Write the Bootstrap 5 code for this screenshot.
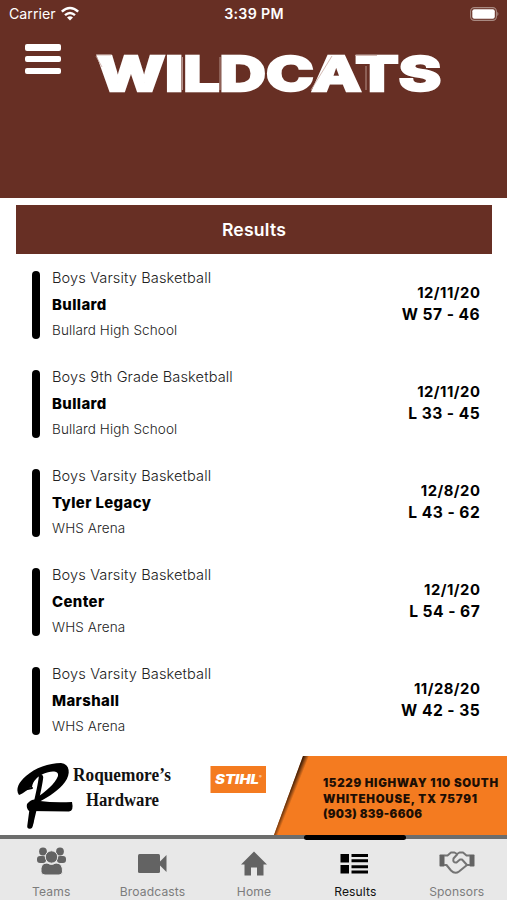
<!DOCTYPE html>
<html lang="en">
<head>
<meta charset="utf-8">
<meta name="viewport" content="width=device-width, initial-scale=1">
<title>Wildcats Results</title>
<link href="https://cdn.jsdelivr.net/npm/bootstrap@5.3.0/dist/css/bootstrap.min.css" rel="stylesheet">
<style>
body{font-family:Inter,"Liberation Sans",sans-serif;background:#fff;color:#000}
.screen{width:507px;height:900px}
.maroon{background:#672f24;color:#fff}
.app-head{height:198px}
.status{height:28px;font-size:14.2px;line-height:28px;padding:0 8px 0 9px;grid-template-columns:1fr auto 1fr}
.status .clock{font-weight:600;letter-spacing:.3px}
.brand-row{padding:16px 0 0 25px}
.menu-btn{width:36px;height:30px}
.menu-btn span{height:6.5px;border-radius:2px;background:#fff}
.wordmark{margin:-5px 0 0 30px}
.title-bar{height:49px;margin:7px 15px 0 16px;font-size:17.6px;font-weight:600;letter-spacing:.22px}
.results{padding:11px 27px 0 32px}
.game{height:78px;margin-bottom:21px}
.stripe{width:8px;height:68px;border-radius:4px;background:#000;margin:1px 12px 0 0}
.game-text>div{line-height:26px;white-space:nowrap}
.team{font-size:14.6px;font-weight:300;color:#222;letter-spacing:.11px}
.game-text .rival{font-size:14.9px;font-weight:800;letter-spacing:.4px;line-height:28px;margin-bottom:-2px}
.venue{font-size:13.5px;font-weight:300;color:#222;letter-spacing:.11px}
.score{line-height:22px;font-weight:650;margin-top:-1px}
.date{font-size:14.8px;letter-spacing:.5px;margin-right:-.4px}
.points{font-size:15.6px;letter-spacing:.46px;margin-right:-.2px}
.ad{height:79px}
.tabs{height:65px;background:#e8e8e8;border-top:4px solid #6c6d6c}
.tab{width:101.4px;color:#7c7c7c;font-size:12.1px;padding:7px 0 0 1px;text-decoration:none}
.tab svg{display:block;fill:#636363;flex-shrink:0}
.tab .cap{line-height:16px;margin-top:7px;letter-spacing:.13px}
.tab.on{color:#111}
.tab.on svg{fill:#000}
.tab.on::before{content:"";position:absolute;top:-4px;left:0;width:102px;height:5px;border-radius:3px;background:#000}
</style>
<script src="https://cdn.jsdelivr.net/npm/bootstrap@5.3.0/dist/js/bootstrap.bundle.min.js"></script>
</head>
<body>
<div class="screen d-flex flex-column overflow-hidden">
  <header class="app-head maroon flex-shrink-0">
    <div class="status d-grid">
      <div class="d-flex align-items-center">Carrier
        <svg class="ms-1" width="20" height="16" viewBox="0 0 20 16"><g fill="none" stroke="#fff" stroke-width="2.4"><path d="M1.8 5.7Q10-1.8 18.2 5.7"/><path d="M5 9.2Q10 4.6 15 9.2"/></g><path fill="#fff" d="M10 14.500L7 11.400Q10 8.900 13 11.400Z"/></svg>
      </div>
      <div class="clock">3:39 PM</div>
      <div class="d-flex align-items-center justify-content-end">
        <svg width="30" height="14" viewBox="0 0 30 14"><rect x="1.600" y=".6" width="25.800" height="12.800" rx="3.800" fill="none" stroke="#a98a82" stroke-width="1.100"/><rect x="3.300" y="2.300" width="22.500" height="9.400" rx="2" fill="#fff"/><path d="M28.300 4.800Q30.600 7 28.300 9.200Z" fill="#a98a82"/></svg>
      </div>
    </div>
    <div class="brand-row d-flex align-items-start">
      <div class="menu-btn d-flex flex-column justify-content-between"><span></span><span></span><span></span></div>
      <svg class="wordmark" width="360" height="70" viewBox="-3 -10 360 70">
        <text y="42" font-family="Inter" font-weight="800" font-size="48" fill="#fff" stroke="#fff" stroke-width="2.500" textLength="344" x="3" lengthAdjust="spacingAndGlyphs">WILDCATS</text>
        <g stroke="#c9aaa3" stroke-width="1" fill="none" opacity=".8"><path d="M2 7L8 18M2 6h15M88.500 8v33M126 8v33M238 7L217 41M261 6.500h22M272 17v24"/></g>
      </svg>
    </div>
  </header>
  <h1 class="title-bar maroon d-flex align-items-center justify-content-center flex-shrink-0 mb-0">Results</h1>
  <main class="results flex-grow-1">
    <div class="game d-flex align-items-center"><div class="stripe"></div><div class="game-text flex-grow-1"><div class="team">Boys Varsity Basketball</div><div class="rival">Bullard</div><div class="venue">Bullard High School</div></div><div class="score text-end"><div class="date">12/11/20</div><div class="points">W 57 - 46</div></div></div>
    <div class="game d-flex align-items-center"><div class="stripe"></div><div class="game-text flex-grow-1"><div class="team">Boys 9th Grade Basketball</div><div class="rival">Bullard</div><div class="venue">Bullard High School</div></div><div class="score text-end"><div class="date">12/11/20</div><div class="points">L 33 - 45</div></div></div>
    <div class="game d-flex align-items-center"><div class="stripe"></div><div class="game-text flex-grow-1"><div class="team">Boys Varsity Basketball</div><div class="rival">Tyler Legacy</div><div class="venue">WHS Arena</div></div><div class="score text-end"><div class="date">12/8/20</div><div class="points">L 43 - 62</div></div></div>
    <div class="game d-flex align-items-center"><div class="stripe"></div><div class="game-text flex-grow-1"><div class="team">Boys Varsity Basketball</div><div class="rival">Center</div><div class="venue">WHS Arena</div></div><div class="score text-end"><div class="date">12/1/20</div><div class="points">L 54 - 67</div></div></div>
    <div class="game d-flex align-items-center mb-0"><div class="stripe"></div><div class="game-text flex-grow-1"><div class="team">Boys Varsity Basketball</div><div class="rival">Marshall</div><div class="venue">WHS Arena</div></div><div class="score text-end"><div class="date">11/28/20</div><div class="points">W 42 - 35</div></div></div>
  </main>
  <aside class="ad flex-shrink-0">
    <svg class="d-block" width="507" height="79" viewBox="0 756 507 79">
      <defs><linearGradient id="edge" gradientUnits="userSpaceOnUse" x1="288" y1="795" x2="293" y2="797"><stop offset="0" stop-color="#3a1c08"/><stop offset="1" stop-color="#f47b20"/></linearGradient></defs>
      <path d="M303 756H507V835H274Z" fill="#f47b20"/>
      <path d="M303 756h6L280 835h-6Z" fill="url(#edge)"/>
      <path d="M19 795C15 789 19 782 26 776C35 768 49 763 61 763C70 764 71 774 65 782C59 790 50 796 39 802L36 798C45 792 55 784 58 776C59 770 50 771 43 774C37 777 33 781 32 787C29 787 24 794 19 795Z"/>
      <g fill="none" stroke="#000" stroke-linecap="round" stroke-linejoin="round">
        <path d="M41 777C40 788 35 806 31 824" stroke-width="4.500"/>
        <path d="M32 811L30 826" stroke-width="5.500"/>
        <path d="M23 790L32 788" stroke-width="2"/>
      </g>
      <path d="M27 804Q33 797 40 801Q54 803 72 802Q74 811 69 811.500Q48 811 29 811Q26 808 27 804Z"/>
      <g font-family="Liberation Serif" font-weight="700" font-size="18.500" fill="#111">
        <text x="73" y="781" textLength="98" lengthAdjust="spacingAndGlyphs">Roquemore’s</text>
        <text x="86" y="806" textLength="73" lengthAdjust="spacingAndGlyphs">Hardware</text>
      </g>
      <rect x="210.500" y="766" width="55.500" height="27" fill="#f47b20"/>
      <text x="215" y="784" textLength="44" lengthAdjust="spacingAndGlyphs" font-family="Inter" font-style="italic" font-weight="900" font-size="13" fill="#fff">STIHL</text>
      <text x="259" y="778" font-family="Inter" font-size="4" fill="#fff">®</text>
      <g font-family="Inter" font-weight="900" font-size="11.500" fill="#1d0f05">
        <text x="323" y="787" textLength="175">15229 HIGHWAY 110 SOUTH</text>
        <text x="323" y="802.500" textLength="154">WHITEHOUSE, TX 75791</text>
        <text x="323" y="817.700" textLength="99">(903) 839-6606</text>
      </g>
    </svg>
  </aside>
  <nav class="tabs d-flex flex-shrink-0">
    <a class="tab d-flex flex-column align-items-center position-relative">
      <svg width="32" height="31" viewBox="0 0 32 31"><circle cx="8" cy="5.500" r="3.900"/><circle cx="25" cy="5.500" r="3.900"/><rect x="2" y="10" width="9" height="7" rx="3"/><rect x="22" y="10" width="9" height="7" rx="3"/><g stroke="#e8e8e8" stroke-width="1"><circle cx="16.500" cy="11" r="6.200"/><path d="M6 26Q5 17 12 17Q16.500 20 21 17Q28 17 27.500 26Q27 29 24 29H10Q6.500 29 6 26Z"/></g></svg>
      <span class="cap">Teams</span>
    </a>
    <a class="tab d-flex flex-column align-items-center position-relative">
      <svg width="32" height="31" viewBox="1 0 32 31"><rect x="2" y="8" width="22" height="19" rx="1.500"/><path d="M22 17.500L30.500 9V26Z"/></svg>
      <span class="cap">Broadcasts</span>
    </a>
    <a class="tab d-flex flex-column align-items-center position-relative">
      <svg width="32" height="31" viewBox="0 0 32 31"><path d="M16 5.500L29 18.500H25.500V29.500H19V21.500H13V29.500H6.500V18.500H3Z"/></svg>
      <span class="cap">Home</span>
    </a>
    <a class="tab on d-flex flex-column align-items-center position-relative">
      <svg width="32" height="31" viewBox="1 0 32 31"><path d="M2.500 8h8.500v8.500H2.500zM2.500 19h8.500v8.500H2.500zM13.500 8H30v3H13.500zM13.500 13.300H30v3H13.500zM13.500 19.200H30v3H13.500zM13.500 24.600H30v3H13.500z"/></svg>
      <span class="cap">Results</span>
    </a>
    <a class="tab d-flex flex-column align-items-center position-relative">
      <svg width="36" height="31" viewBox="0 0 36 31"><rect x=".5" y="8.500" width="5" height="12" rx=".8"/><rect x="30.500" y="8.500" width="5" height="12" rx=".8"/><path d="M5 9.500H8.500L12 6.500H15.500L18 8L20.500 6.500H24L27.500 9.500H31M5 19H7.500L12 24.500Q16 28.500 20 25.500L28 19H31M18.500 8L14.500 12.500Q13.500 17 17.500 16.500L21 13.500H23L28 19" fill="none" stroke="#747474" stroke-width="2" stroke-linejoin="round"/></svg>
      <span class="cap">Sponsors</span>
    </a>
  </nav>
</div>
</body>
</html>
